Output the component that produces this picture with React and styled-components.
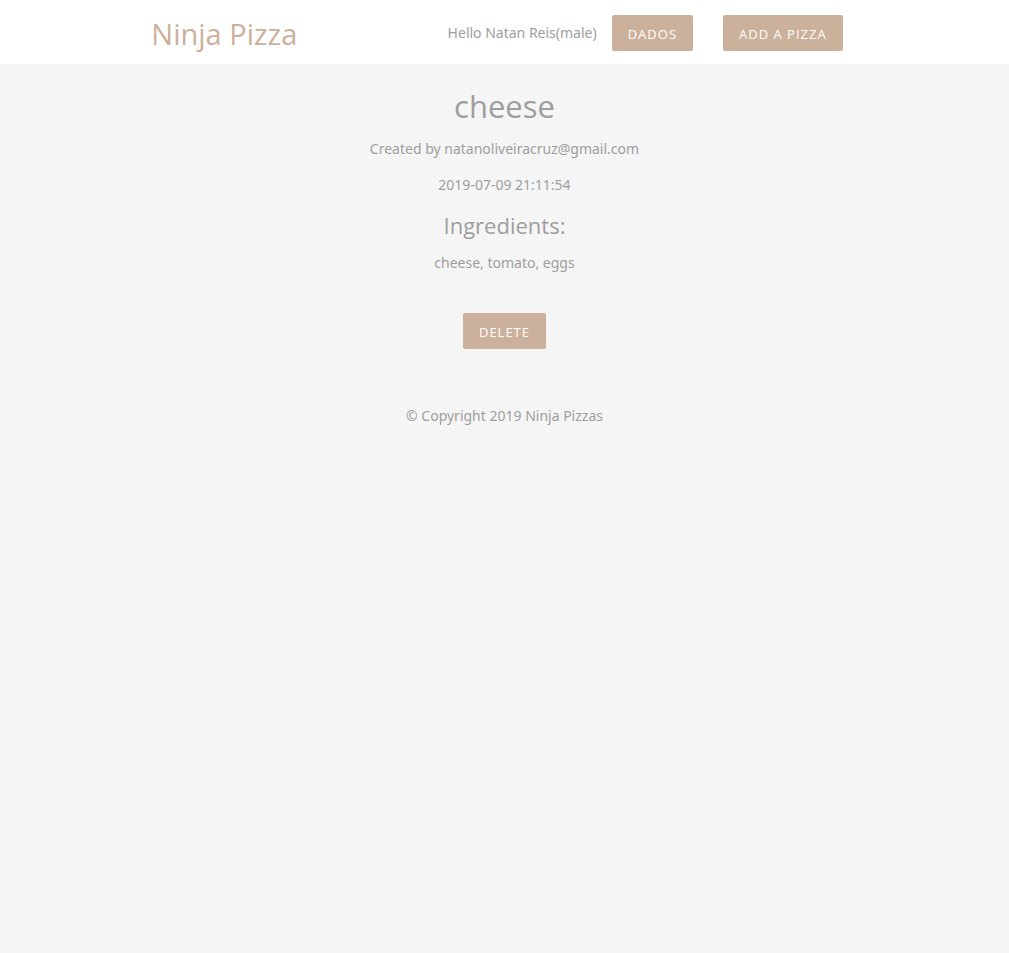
import React from "react";
import styled, { createGlobalStyle } from "styled-components";

const GlobalStyle = createGlobalStyle`
  *, *::before, *::after { box-sizing: border-box; }
  body {
    margin: 0;
    min-height: 100vh;
    background: #f5f5f5;
    color: #9e9e9e;
    font-family: "Noto Sans", "Open Sans", sans-serif;
    font-size: 14px;
    line-height: 22px;
  }
`;

const NavBar = styled.nav`
  background: #fff;
`;

const NavInner = styled.div`
  width: 70%;
  min-height: 64px;
  margin: 0 auto;
  display: flex;
  align-items: center;
  justify-content: space-between;
`;

const Brand = styled.a`
  padding-top: 4px;
  color: #cbb09c;
  font-family: "Open Sans", sans-serif;
  font-size: 29px;
  line-height: 40px;
  text-decoration: none;
`;

const NavList = styled.ul`
  display: flex;
  align-items: center;
  list-style: none;
  margin: 0;
  padding: 2px 0 0;
`;

const Button = styled.button`
  height: 36px;
  padding: 2px 16px 0;
  border: 0;
  border-radius: 2px;
  background: #cbb09c;
  color: #fff;
  font-family: "Open Sans", sans-serif;
  font-size: 13px;
  line-height: 34px;
  letter-spacing: 1px;
  text-transform: uppercase;
  cursor: pointer;
`;

const NavButton = styled(Button)`
  display: block;
  margin: 0 15px;
`;

const Details = styled.main`
  width: 70%;
  margin: 0 auto;
  padding-top: 21px;
  text-align: center;
`;

const Title = styled.h4`
  margin: 0 0 11px;
  font-family: "Open Sans", sans-serif;
  font-size: 31px;
  font-weight: 400;
  line-height: 42px;
`;

const Subtitle = styled.h5`
  margin: 15px 0 13px;
  font-family: "Open Sans", sans-serif;
  font-size: 22px;
  font-weight: 400;
  line-height: 28px;
`;

const Text = styled.p`
  margin: 0 0 14px;
`;

const Form = styled.form`
  margin-top: 39px;
`;

const Footer = styled.footer`
  padding: 56px 0 24px;
  text-align: center;
`;

export default function App() {
  return (
    <>
      <GlobalStyle />
      <NavBar>
        <NavInner>
          <Brand href="#">Ninja Pizza</Brand>
          <NavList>
            <li>Hello Natan Reis(male)</li>
            <li><NavButton type="button">Dados</NavButton></li>
            <li><NavButton type="button">Add a Pizza</NavButton></li>
          </NavList>
        </NavInner>
      </NavBar>
      <Details>
        <Title>cheese</Title>
        <Text>Created by natanoliveiracruz@gmail.com</Text>
        <Text>2019-07-09 21:11:54</Text>
        <Subtitle>Ingredients:</Subtitle>
        <Text>cheese, tomato, eggs</Text>
        <Form onSubmit={(event) => event.preventDefault()}>
          <Button type="submit">Delete</Button>
        </Form>
      </Details>
      <Footer>© Copyright 2019 Ninja Pizzas</Footer>
    </>
  );
}
